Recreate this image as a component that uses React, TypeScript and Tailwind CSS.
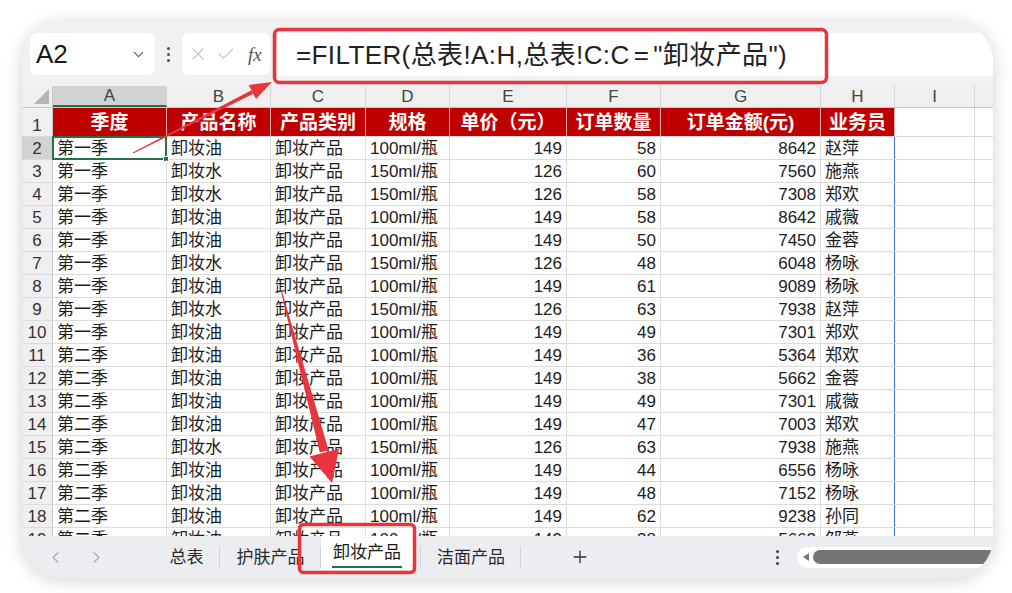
import { ChevronDown, ChevronLeft, ChevronRight, X, Check, Plus } from "lucide-react";

const colW = ["w-[114px]", "w-[104px]", "w-[95px]", "w-[84px]", "w-[117px]", "w-[94px]", "w-[160px]", "w-[74px]", "w-[80px]", "w-[40px]"];
const letters = ["A", "B", "C", "D", "E", "F", "G", "H", "I", ""];
const headers = ["季度", "产品名称", "产品类别", "规格", "单价（元）", "订单数量", "订单金额(元)", "业务员"];

// rows 2..19
const data: string[][] = [
  ["第一季", "卸妆油", "卸妆产品", "100ml/瓶", "149", "58", "8642", "赵萍"],
  ["第一季", "卸妆水", "卸妆产品", "150ml/瓶", "126", "60", "7560", "施燕"],
  ["第一季", "卸妆水", "卸妆产品", "150ml/瓶", "126", "58", "7308", "郑欢"],
  ["第一季", "卸妆油", "卸妆产品", "100ml/瓶", "149", "58", "8642", "戚薇"],
  ["第一季", "卸妆油", "卸妆产品", "100ml/瓶", "149", "50", "7450", "金蓉"],
  ["第一季", "卸妆水", "卸妆产品", "150ml/瓶", "126", "48", "6048", "杨咏"],
  ["第一季", "卸妆油", "卸妆产品", "100ml/瓶", "149", "61", "9089", "杨咏"],
  ["第一季", "卸妆水", "卸妆产品", "150ml/瓶", "126", "63", "7938", "赵萍"],
  ["第一季", "卸妆油", "卸妆产品", "100ml/瓶", "149", "49", "7301", "郑欢"],
  ["第二季", "卸妆油", "卸妆产品", "100ml/瓶", "149", "36", "5364", "郑欢"],
  ["第二季", "卸妆油", "卸妆产品", "100ml/瓶", "149", "38", "5662", "金蓉"],
  ["第二季", "卸妆油", "卸妆产品", "100ml/瓶", "149", "49", "7301", "戚薇"],
  ["第二季", "卸妆油", "卸妆产品", "100ml/瓶", "149", "47", "7003", "郑欢"],
  ["第二季", "卸妆水", "卸妆产品", "150ml/瓶", "126", "63", "7938", "施燕"],
  ["第二季", "卸妆油", "卸妆产品", "100ml/瓶", "149", "44", "6556", "杨咏"],
  ["第二季", "卸妆油", "卸妆产品", "100ml/瓶", "149", "48", "7152", "杨咏"],
  ["第二季", "卸妆油", "卸妆产品", "100ml/瓶", "149", "62", "9238", "孙同"],
  ["第二季", "卸妆油", "卸妆产品", "100ml/瓶", "149", "38", "5662", "邹燕"],
];

function FormulaBar() {
  return (
    <div className="h-[64px] shrink-0 bg-[#f0f1f3] flex items-start pt-[11px] pl-[8px]">
      {/* name box */}
      <div className="w-[125px] h-[42px] bg-white rounded-[6px] flex items-center pl-[6px] pr-[8px]">
        <span className="text-[26px] text-[#1a1a1a] leading-none">A2</span>
        <ChevronDown size={17} strokeWidth={1.6} className="ml-auto text-[#555]" />
      </div>
      <div className="w-[27px] h-[42px] flex flex-col items-center justify-center gap-[3px]">
        <span className="w-[3px] h-[3px] rounded-full bg-[#555]" />
        <span className="w-[3px] h-[3px] rounded-full bg-[#555]" />
        <span className="w-[3px] h-[3px] rounded-full bg-[#555]" />
      </div>
      {/* cancel / enter / fx */}
      <div className="w-[88px] h-[42px] bg-white rounded-[6px] flex items-center pl-[6px] gap-[8px]">
        <X size={20} strokeWidth={1.3} className="text-[#c4c4c4]" />
        <Check size={20} strokeWidth={1.3} className="text-[#c4c4c4]" />
        <span className="ml-[4px] text-[19px] italic text-[#555] font-['Liberation_Serif',serif] leading-none">fx</span>
      </div>
      <div className="ml-[8px] flex-1 h-[43px] bg-white flex items-center pl-[18px]">
        <span className="text-[26px] text-[#222] leading-none whitespace-nowrap tracking-[0.4px]">
          =FILTER(总表!A:H,总表!C:C<span className="mx-[4px]">=</span>"卸妆产品")
        </span>
      </div>
    </div>
  );
}

function ColumnHeader() {
  return (
    <div className="flex h-[22px] bg-[#efefef] border-b border-[#c8c8c8]">
      <div className="w-[31px] shrink-0 border-r border-[#c8c8c8] relative">
        <div className="absolute right-[3px] bottom-[3px] w-0 h-0 border-l-[15px] border-l-transparent border-b-[15px] border-b-[#b4b4b4]" />
      </div>
      {letters.map((l, i) => (
        <div
          key={i}
          className={`${colW[i]} shrink-0 flex items-center justify-center text-[17px] leading-none text-[#444] border-r border-[#d4d4d4] ${
            i === 0 ? "bg-[#d2d2d2] border-b-2 border-b-[#217346]" : ""
          }`}
        >
          {l}
        </div>
      ))}
    </div>
  );
}

function HeaderRow() {
  return (
    <div className="flex h-[29px] border-b border-[#d9d9d9]">
      <div className="w-[31px] shrink-0 bg-[#efefef] border-r border-[#c8c8c8] flex items-end justify-center pb-[2px] text-[17px] leading-none text-[#333]">
        1
      </div>
      {letters.map((_, i) =>
        i < 8 ? (
          <div
            key={i}
            className={`${colW[i]} shrink-0 bg-[#c00000] border-r border-[#e4b0b0] flex items-center justify-center text-white font-bold text-[19px] leading-none whitespace-nowrap`}
          >
            {headers[i]}
          </div>
        ) : (
          <div key={i} className={`${colW[i]} shrink-0 border-r border-[#d9d9d9]`} />
        )
      )}
    </div>
  );
}

function DataRow({ n, cells }: { n: number; cells: string[] }) {
  return (
    <div className="flex h-[23px] border-b border-[#dcdcdc]">
      <div
        className={`w-[31px] shrink-0 border-r border-[#c8c8c8] flex items-center justify-center text-[17px] leading-none text-[#333] ${
          n === 2 ? "bg-[#d2d2d2]" : "bg-[#efefef]"
        }`}
      >
        {n}
      </div>
      {letters.map((_, i) => {
        const v = cells[i];
        const right = i >= 4 && i <= 6;
        return (
          <div
            key={i}
            className={`${colW[i]} shrink-0 relative flex items-center text-[17px] leading-none text-[#1c1c1c] whitespace-nowrap border-r ${
              i === 7 ? "border-r-[#3b6fd4]" : "border-r-[#dcdcdc]"
            } ${right ? "justify-end pr-[4px]" : "pl-[4px]"}`}
          >
            {v}
            {n === 2 && i === 0 && (
              <div className="absolute left-[-1px] top-[-1px] right-[-1px] bottom-[-1px] border-2 border-[#217346]">
                <div className="absolute right-[-4px] bottom-[-4px] w-[6px] h-[6px] bg-[#217346] border border-white" />
              </div>
            )}
          </div>
        );
      })}
    </div>
  );
}

function TabBar() {
  const tab = "h-full flex items-center justify-center text-[17px] text-[#2a2a2a] leading-none relative";
  return (
    <div className="h-[42px] shrink-0 bg-[#ebedf0] flex items-center">
      <div className="w-[131px] shrink-0 flex items-center pl-[24px] gap-[22px] text-[#a8a8a8]">
        <ChevronLeft size={19} strokeWidth={1.4} />
        <ChevronRight size={19} strokeWidth={1.4} />
      </div>
      <div className={`${tab} w-[67px]`}>
        总表
        <span className="absolute right-0 top-[10px] h-[22px] w-px bg-[#cfd2d6]" />
      </div>
      <div className={`${tab} w-[101px]`}>
        护肤产品
        <span className="absolute right-0 top-[10px] h-[22px] w-px bg-[#cfd2d6]" />
      </div>
      <div className="w-[100px] h-full flex items-start justify-center relative">
        <div className="w-[92px] h-[34px] bg-white mr-[8px] flex flex-col items-center justify-center">
          <span className="text-[17px] text-[#1a1a1a] leading-none pt-[6px]">卸妆产品</span>
          <span className="mt-[5px] w-[70px] h-[2px] bg-[#1e7145]" />
        </div>
        <span className="absolute right-0 top-[10px] h-[22px] w-px bg-[#cfd2d6]" />
      </div>
      <div className={`${tab} w-[100px]`}>
        洁面产品
        <span className="absolute right-0 top-[10px] h-[22px] w-px bg-[#cfd2d6]" />
      </div>
      <div className="w-[118px] h-full flex items-center justify-center text-[#333]">
        <Plus size={20} strokeWidth={1.6} />
      </div>
      <div className="flex-1" />
      <div className="w-[20px] flex flex-col items-center gap-[3px] mr-[10px]">
        <span className="w-[3px] h-[3px] rounded-full bg-[#444]" />
        <span className="w-[3px] h-[3px] rounded-full bg-[#444]" />
        <span className="w-[3px] h-[3px] rounded-full bg-[#444]" />
      </div>
      <div className="w-[196px] shrink-0 h-[21px] bg-white rounded-l-full flex items-center pl-[6px] gap-[4px]">
        <span className="w-0 h-0 border-y-[4px] border-y-transparent border-r-[6px] border-r-[#777]" />
        <span className="flex-1 h-[14px] bg-[#747474] rounded-l-full" />
      </div>
    </div>
  );
}

export default function App() {
  return (
    <div className="relative w-[1012px] h-[593px] bg-white overflow-hidden pl-[22px] pt-[22px] font-['Liberation_Sans','Noto_Sans_CJK_SC',sans-serif]">
      <div className="w-[971px] h-[556px] rounded-[40px] overflow-hidden bg-white shadow-[0_2px_18px_rgba(0,0,0,0.18)] flex flex-col">
        <FormulaBar />
        <div className="flex-1 overflow-hidden bg-white">
          <ColumnHeader />
          <HeaderRow />
          {data.map((r, i) => (
            <DataRow key={i} n={i + 2} cells={r} />
          ))}
        </div>
        <TabBar />
      </div>

      {/* annotations */}
      <svg className="absolute left-0 top-0 pointer-events-none" width="1012" height="593" viewBox="0 0 1012 593">
        <rect x="274.5" y="29.5" width="552" height="53" rx="5" fill="none" stroke="#e8343c" strokeWidth="3.5" />
        <rect x="299.5" y="524.5" width="115" height="48" rx="4" fill="none" stroke="#e8343c" strokeWidth="3.5" />
        <polygon points="133.2,153.4 132.8,152.6 251.5,90.2 253.3,93.8" fill="#e8343c" />
        <polygon points="272,82 248.8,84.9 256,99.1" fill="#e8343c" />
        <polygon points="281.5,289.9 280.5,290.1 319.8,452.5 328.6,450.2" fill="#e8343c" />
        <polygon points="332,483 309.5,456.5 339,448.7" fill="#e8343c" />
      </svg>
    </div>
  );
}
